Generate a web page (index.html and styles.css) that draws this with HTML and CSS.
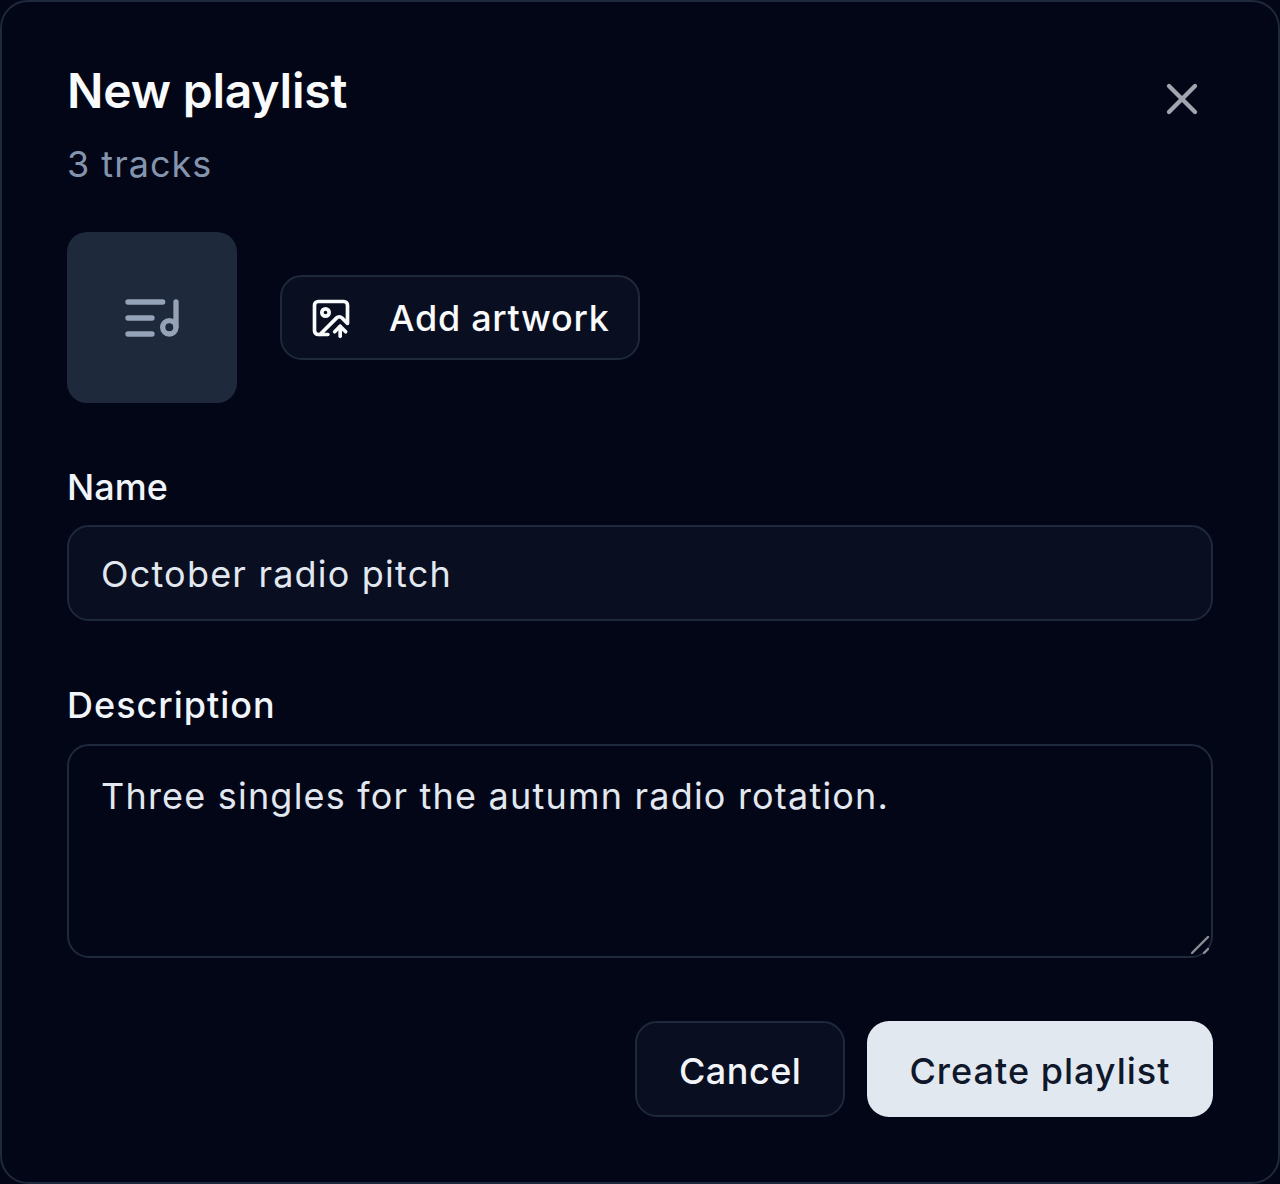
FILE: index.html
```html
<!DOCTYPE html>
<html lang="en">
<head>
  <meta charset="UTF-8">
  <title>New playlist</title>
  <link rel="stylesheet" href="styles.css">
</head>
<body>
  <div class="dialog">
    <div class="header">
      <div>
        <h2 class="title">New playlist</h2>
        <p class="subtitle">3 tracks</p>
      </div>
      <button class="close" aria-label="Close">
        <svg class="close-icon" viewBox="0 0 24 24"><path d="M18 6 6 18"/><path d="m6 6 12 12"/></svg>
      </button>
    </div>

    <div class="artwork">
      <div class="cover">
        <svg class="cover-icon" viewBox="0 0 24 24"><path d="M21 15V6"/><path d="M18.5 18a2.5 2.5 0 1 0 0-5 2.5 2.5 0 0 0 0 5Z"/><path d="M12 12H3"/><path d="M16 6H3"/><path d="M12 18H3"/></svg>
      </div>
      <button class="btn-artwork">
        <svg class="artwork-icon" viewBox="0 0 24 24"><path d="M10.3 21H5a2 2 0 0 1-2-2V5a2 2 0 0 1 2-2h14a2 2 0 0 1 2 2v10l-3.1-3.1a2 2 0 0 0-2.814.014L6 21"/><path d="m14 19.5 3-3 3 3"/><path d="M17 22v-5.5"/><circle cx="9" cy="9" r="2"/></svg>
        <span>Add artwork</span>
      </button>
    </div>

    <label class="label">Name</label>
    <input class="field input" type="text" value="October radio pitch">

    <label class="label label-desc">Description</label>
    <div class="textarea-wrap">
      <textarea class="field textarea">Three singles for the autumn radio rotation.</textarea>
      <svg class="grip" viewBox="0 0 20 20"><path d="M1 17 17 1"/><path d="M13 17l4-4"/></svg>
    </div>

    <div class="actions">
      <button class="btn btn-cancel">Cancel</button>
      <button class="btn btn-create">Create playlist</button>
    </div>
  </div>
</body>
</html>
```

FILE: styles.css
```css
* {
  box-sizing: border-box;
}
body {
  margin: 0;
  background: #020617;
  font-family: Inter, "Liberation Sans", sans-serif;
}
svg {
  fill: none;
  stroke: currentColor;
  stroke-width: 2;
  stroke-linecap: round;
  stroke-linejoin: round;
  display: block;
}
button {
  font-family: inherit;
  cursor: pointer;
}
.dialog {
  width: 1280px;
  height: 1184px;
  padding: 64px 65px;
  background: #020617;
  border: 2px solid #1e293b;
  border-radius: 28px;
}
.header {
  display: flex;
  justify-content: space-between;
  align-items: flex-start;
}
.title {
  margin: 0;
  font-size: 48px;
  line-height: 50px;
  font-weight: 600;
  letter-spacing: -0.2px;
  color: #f8fafc;
}
.subtitle {
  margin: 28px 0 0;
  font-size: 36px;
  line-height: 40px;
  letter-spacing: 1px;
  color: #8494ad;
}
.close {
  margin: 7px 5px 0 0;
  padding: 0;
  background: none;
  border: 0;
  color: #a1a5ae;
}
.close-icon {
  width: 52px;
  height: 52px;
}
.artwork {
  display: flex;
  align-items: center;
  gap: 43px;
  margin-top: 48px;
}
.cover {
  width: 170px;
  height: 171px;
  display: flex;
  align-items: center;
  justify-content: center;
  background: #1e293b;
  border-radius: 20px;
}
.cover-icon {
  width: 64px;
  height: 64px;
  color: #94a3b8;
}
.btn-artwork {
  display: flex;
  align-items: center;
  gap: 36px;
  height: 85px;
  padding: 0 29px 0 27px;
  background: #090e20;
  border: 2px solid #1e293b;
  border-radius: 22px;
  color: #f8fafc;
  font-size: 36px;
  font-weight: 500;
  letter-spacing: 0.7px;
}
.artwork-icon {
  width: 44px;
  height: 44px;
}
.label {
  display: block;
  margin-top: 62px;
  font-size: 36px;
  line-height: 44px;
  font-weight: 500;
  color: #f1f5f9;
}
.label-desc {
  margin-top: 62px;
  letter-spacing: 1px;
}
.field {
  display: block;
  width: 100%;
  padding: 0 32px;
  background: #090e20;
  border: 2px solid #1e293b;
  border-radius: 22px;
  color: #e2e8f0;
  font-family: inherit;
  font-size: 36px;
  letter-spacing: 1.2px;
  outline: none;
}
.input {
  height: 96px;
  margin-top: 16px;
  padding-top: 2px;
}
.textarea-wrap {
  position: relative;
  margin-top: 17px;
}
.textarea {
  height: 214px;
  padding-top: 26px;
  background: #020617;
  line-height: 48px;
  resize: none;
}
.grip {
  position: absolute;
  right: 2px;
  bottom: 2px;
  width: 20px;
  height: 20px;
  color: #8b8f96;
  stroke-width: 2.4;
}
.actions {
  display: flex;
  justify-content: flex-end;
  gap: 22px;
  margin-top: 63px;
}
.btn {
  height: 96px;
  padding: 3px 42px 0;
  border-radius: 22px;
  font-size: 36px;
  font-weight: 500;
}
.btn-cancel {
  padding: 3px 41.5px 0;
  background: #090e20;
  border: 2px solid #1e293b;
  color: #f1f5f9;
  letter-spacing: 0.5px;
}
.btn-create {
  padding: 3px 42.5px 0;
  background: #e2e8f0;
  border: 0;
  color: #0f172a;
  letter-spacing: 1px;
}
```
